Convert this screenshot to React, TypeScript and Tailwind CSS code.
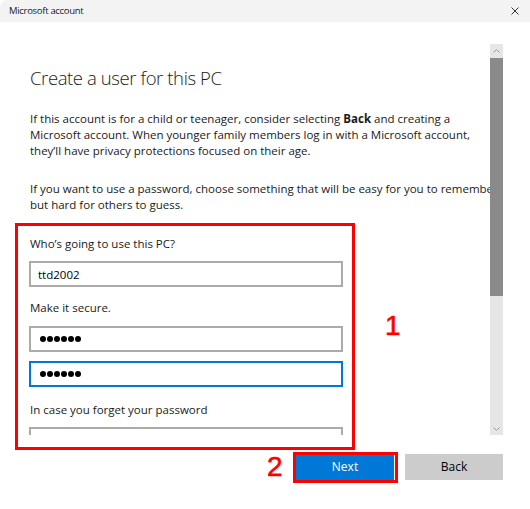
export default function App() {
  const font = { fontFamily: '"Open Sans", "Noto Sans", Arial, sans-serif' };
  return (
    <main className="relative flex h-[509px] w-[530px] flex-col overflow-hidden bg-white text-black" style={font}>
      {/* title bar */}
      <div className="flex h-[22px] shrink-0 items-center justify-between rounded-tl-[7px] bg-[#f3f3f3] pl-[9px] pr-[11px]">
        <span className="text-[9.5px] leading-none tracking-[-0.3px] text-[#1a1a1a]">Microsoft account</span>
        <svg width="8" height="8" viewBox="0 0 8 8" className="text-[#333]">
          <path d="M0.5 0.5 L7.5 7.5 M7.5 0.5 L0.5 7.5" stroke="currentColor" strokeWidth="1" />
        </svg>
      </div>

      {/* body */}
      <div className="flex h-[413px] shrink-0">
        <div className="w-[490px] overflow-hidden pl-[30px]">
          <div className="w-[480px]">
            <h1 className="mt-[42px] text-[18.5px] font-light leading-[28px] tracking-[-0.4px] text-[#1a1a1a]">Create a user for this PC</h1>
            <p className="mt-[19px] text-[11.5px] leading-[16px] text-[#1a1a1a]">
              If this account is for a child or teenager, consider selecting <b className="font-bold">Back</b> and creating a
              <br />
              Microsoft account. When younger family members log in with a Microsoft account,
              <br />
              they’ll have privacy protections focused on their age.
            </p>
            <p className="mt-[22px] whitespace-nowrap text-[11.5px] leading-[16px] text-[#1a1a1a]">
              If you want to use a password, choose something that will be easy for you to remember
              <br />
              but hard for others to guess.
            </p>

            <label className="mt-[23px] block text-[11.5px] leading-[16px] text-[#1a1a1a]">Who’s going to use this PC?</label>
            <input
              readOnly
              value="ttd2002"
              className="mt-[9px] block h-[26px] w-[314px] -translate-x-px border-2 border-[#ababab] bg-white px-[7px] text-[11.5px] text-black outline-none"
            />

            <label className="mt-[13px] block text-[11.5px] leading-[16px] text-[#1a1a1a]">Make it secure.</label>
            <div className="mt-[10px] flex h-[26px] w-[314px] -translate-x-px items-center gap-[1px] border-2 border-[#ababab] bg-white pl-[9px]">
              {[0, 1, 2, 3, 4, 5].map((i) => (
                <span key={i} className="h-[6px] w-[6px] rounded-full bg-black" />
              ))}
            </div>
            <div className="mt-[9px] flex h-[26px] w-[314px] -translate-x-px items-center gap-[1px] border-2 border-[#0078d7] bg-white pl-[9px]">
              {[0, 1, 2, 3, 4, 5].map((i) => (
                <span key={i} className="h-[6px] w-[6px] rounded-full bg-black" />
              ))}
            </div>

            <label className="mt-[15px] block text-[11.5px] leading-[16px] text-[#1a1a1a]">In case you forget your password</label>
            <div className="mt-[9px] h-[26px] w-[314px] -translate-x-px border-2 border-[#ababab] bg-white" />
          </div>
        </div>

        {/* scrollbar */}
        <div className="mt-[22px] flex w-[13px] flex-col bg-[#e6e6e6]">
          <div className="flex h-[14px] items-center justify-center">
            <svg width="7" height="4" viewBox="0 0 7 4">
              <path d="M0.5 3.5 L3.5 0.5 L6.5 3.5" fill="none" stroke="#9a9a9a" strokeWidth="1" />
            </svg>
          </div>
          <div className="h-[238px] bg-[#8a8a8a]" />
          <div className="flex-1" />
          <div className="flex h-[13px] items-center justify-center">
            <svg width="7" height="4" viewBox="0 0 7 4">
              <path d="M0.5 0.5 L3.5 3.5 L6.5 0.5" fill="none" stroke="#9a9a9a" strokeWidth="1" />
            </svg>
          </div>
        </div>
      </div>

      {/* footer buttons */}
      <div className="flex justify-end gap-[11px] pr-[27px] pt-[19px]">
        <button className="h-[26px] w-[98px] bg-[#0078d7] text-[12px] text-white">Next</button>
        <button className="h-[26px] w-[98px] bg-[#cccccc] text-[12px] text-black">Back</button>
      </div>

      {/* annotations */}
      <div className="pointer-events-none absolute left-[15px] top-[223px] h-[227px] w-[340px] border-[3px] border-[#ff0000]" />
      <div className="pointer-events-none absolute left-[293px] top-[452px] h-[31px] w-[105px] border-[3px] border-[#ff0000]" />
      <span
        className="pointer-events-none absolute left-[385px] top-[312px] text-[28px] leading-none text-[#ff0000] [-webkit-text-stroke:0.6px_#ff0000]"
        style={{ fontFamily: '"Liberation Sans", Arial, sans-serif' }}
      >
        1
      </span>
      <span
        className="pointer-events-none absolute left-[267px] top-[453px] text-[28px] leading-none text-[#ff0000] [-webkit-text-stroke:0.6px_#ff0000]"
        style={{ fontFamily: '"Liberation Sans", Arial, sans-serif' }}
      >
        2
      </span>
    </main>
  );
}
